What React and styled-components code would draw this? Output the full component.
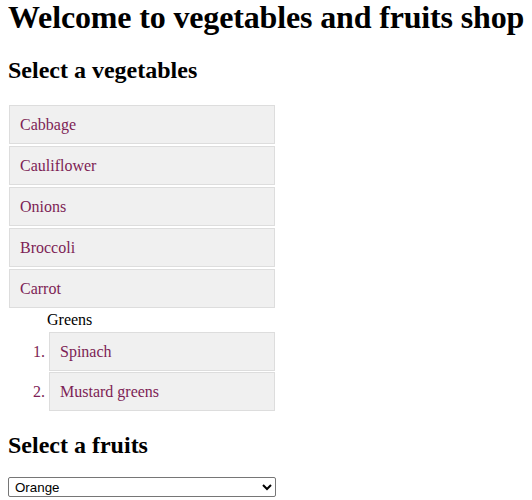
import React, { useState } from 'react';
import styled, { createGlobalStyle } from 'styled-components';

const GlobalStyle = createGlobalStyle`
    html, body {
        overflow: hidden;
    }
    body {
        margin: 0 8px;
        font-family: "Liberation Serif", "Times New Roman", serif;
        font-size: 16px;
        color: #000;
        background: #fff;
    }
`

const Title = styled.h1`
    margin: -1px 0 21px;
    font-size: 32px;
    letter-spacing: -0.15px;
    white-space: nowrap;
`

const Heading = styled.h2`
    margin: ${props => props.gap || '20px 0'};
    font-size: 24px;
`

const List = styled.ul`
    list-style: none;
    margin: 21px 0 16px 1px;
    padding: 0;
    width: 266px;
`

const NumberedList = styled.ol`
    margin: 0;
    padding: 0 0 0 40px;
    color: #7d1e55;
`

const Item = styled.li`
    color: #7d1e55;
    margin-bottom: ${props => props.space || '2px'};
`

const Entry = styled.a`
    display: block;
    padding: 10px;
    background: #f0f0f0;
    border: 1px solid #dddddd;
    color: #7d1e55;
    text-decoration: none;
    line-height: 17px;
`

const GroupLabel = styled.div`
    color: #000;
    margin: 0 0 2px 38px;
    line-height: 20px;
`

const FruitSelect = styled.select`
    width: 268px;
    height: 20px;
    font-family: "Liberation Sans", Arial, sans-serif;
    font-size: 13.33px;
    border: 1px solid #767676;
    border-radius: 2px;
    background: #fff;
    color: #000;
    padding: 0 2px;
`

const vegetables = ['Cabbage', 'Cauliflower', 'Onions', 'Broccoli', 'Carrot']
const greens = ['Spinach', 'Mustard greens']
const fruits = ['Orange', 'Apple', 'Banana', 'Mango', 'Grapes']

export default function App() {
    const [fruit, setFruit] = useState('Orange')

    return (
        <>
            <GlobalStyle />
            <Title>Welcome to vegetables and fruits shop</Title>

            <Heading>Select a vegetables</Heading>
            <List>
                {vegetables.map(name => (
                    <Item key={name}>
                        <Entry href="#">{name}</Entry>
                    </Item>
                ))}
                <Item space="0">
                    <GroupLabel>Greens</GroupLabel>
                    <NumberedList>
                        {greens.map((name, i) => (
                            <Item key={name} space={i === greens.length - 1 ? '0' : '1px'}>
                                <Entry href="#">{name}</Entry>
                            </Item>
                        ))}
                    </NumberedList>
                </Item>
            </List>

            <Heading gap="21px 0 18px">Select a fruits</Heading>
            <FruitSelect value={fruit} onChange={e => setFruit(e.target.value)}>
                {fruits.map(name => (
                    <option key={name} value={name}>{name}</option>
                ))}
            </FruitSelect>
        </>
    )
}
